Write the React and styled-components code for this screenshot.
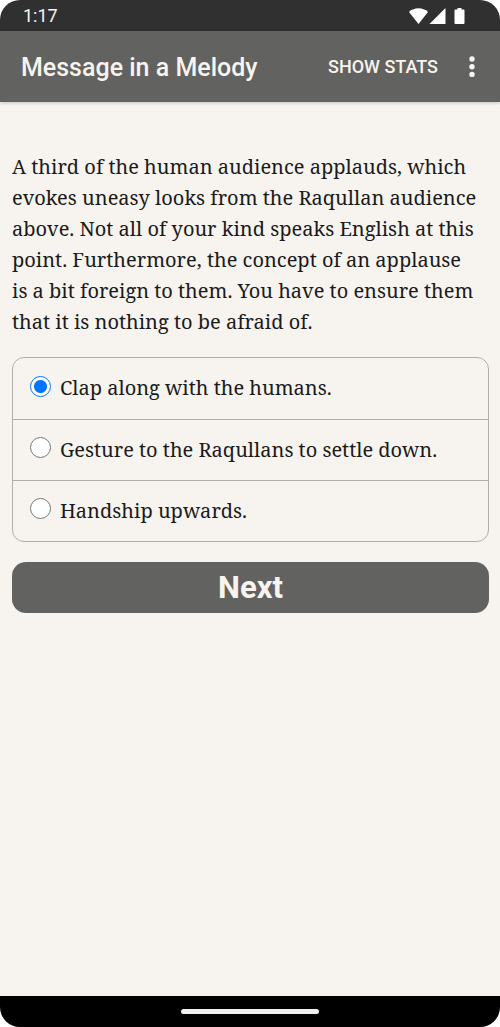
import React, { useState } from 'react';
import styled, { createGlobalStyle } from 'styled-components';

const GlobalStyle = createGlobalStyle`
	* {
		box-sizing: border-box;
	}

	body {
		margin: 0;
		background: #ffffff;
	}
`;

const Screen = styled.div`
	display: flex;
	flex-direction: column;
	min-height: 100vh;
	border-radius: 20px;
	overflow: hidden;
	background: #f7f4f0;
	color: #1b1b1b;
	font-family: 'Noto Serif', 'Liberation Serif', serif;
`;

const StatusBar = styled.div`
	display: flex;
	align-items: center;
	justify-content: space-between;
	height: 31px;
	padding: 0 34px 0 23px;
	background: #303030;
	color: #f4f4f4;
	font: 400 18px/30px Roboto, sans-serif;
`;

const StatusIcons = styled.svg`
	display: block;
	width: 57px;
	height: 18px;
	fill: #ffffff;
`;

const AppBar = styled.header`
	display: flex;
	align-items: center;
	height: 71px;
	padding: 0 15px 0 21px;
	background: #626260;
	box-shadow: 0 1px 3px rgba(0, 0, 0, 0.2);
	color: #f7f4f0;
	font-family: Roboto, sans-serif;

	h1 {
		flex: 1;
		margin: 0;
		padding-top: 2px;
		font-size: 25px;
		font-weight: 500;
		line-height: 32px;
	}

	button {
		padding: 0;
		border: none;
		background: none;
		color: inherit;
		cursor: pointer;
	}
`;

const StatsButton = styled.button`
	font: 500 18px/24px Roboto, sans-serif;
`;

const MenuButton = styled.button`
	width: 26px;
	height: 26px;
	margin-left: 21px;

	svg {
		display: block;
		fill: currentColor;
	}
`;

const Story = styled.main`
	flex: 1;
	padding: 49px 11px 24px 12px;

	p {
		margin: 0 0 20px;
		padding-right: 8px;
		font-size: 20px;
		line-height: 31px;
	}
`;

const Choices = styled.fieldset`
	margin: 0 0 20px;
	padding: 0;
	border: 1px solid #b0aeac;
	border-radius: 12px;
`;

const Choice = styled.label`
	display: flex;
	align-items: center;
	gap: 9px;
	min-height: 61px;
	padding: 0 17px 1px;
	font-size: 20px;
	line-height: 30px;
	cursor: pointer;

	& + & {
		border-top: 1px solid #b0aeac;
	}
`;

const Radio = styled.input`
	appearance: none;
	flex: none;
	width: 21px;
	height: 21px;
	margin: 0 0 4px;
	border: 1px solid #767676;
	border-radius: 50%;
	background: #ffffff;

	&:checked {
		border-color: #0075ff;
		background: radial-gradient(circle, #0075ff 6px, #ffffff 7px);
	}
`;

const NextButton = styled.button`
	display: block;
	width: 100%;
	height: 51px;
	padding: 0;
	border: none;
	border-radius: 14px;
	background: #626260;
	color: #f7f4f0;
	font: 700 31px/50px Roboto, sans-serif;
	cursor: pointer;
`;

const NavBar = styled.footer`
	display: flex;
	align-items: center;
	justify-content: center;
	height: 31px;
	background: #000000;
`;

const HomeHandle = styled.div`
	width: 138px;
	height: 5px;
	border-radius: 3px;
	background: #f0f0f0;
`;

const choices = [
	'Clap along with the humans.',
	'Gesture to the Raqullans to settle down.',
	'Handship upwards.',
];

const App = () => {
	const [selected, setSelected] = useState(0);

	return (
		<>
			<GlobalStyle />
			<Screen>
				<StatusBar>
					<span>1:17</span>
					<StatusIcons viewBox="0 0 57 18" aria-hidden="true">
						<path d="M0 5 C5 0 14 0 19 5 L9.5 17 Z" />
						<path d="M36.500 1 V17 H20.500 Z" />
						<path d="M48.500 1 h4 v1.500 h2 q1 0 1 1 V16 q0 1 -1 1 h-8 q-1 0 -1 -1 V3.500 q0 -1 1 -1 h2 Z" />
					</StatusIcons>
				</StatusBar>
				<AppBar>
					<h1>Message in a Melody</h1>
					<StatsButton type="button">SHOW STATS</StatsButton>
					<MenuButton type="button" aria-label="More options">
						<svg width="26" height="26" viewBox="0 0 26 26">
							<circle cx="13" cy="5" r="2.700" />
							<circle cx="13" cy="12.700" r="2.700" />
							<circle cx="13" cy="20.400" r="2.700" />
						</svg>
					</MenuButton>
				</AppBar>
				<Story>
					<p>
						A third of the human audience applauds, which evokes uneasy looks
						from the Raqullan audience above. Not all of your kind speaks
						English at this point. Furthermore, the concept of an applause is a
						bit foreign to them. You have to ensure them that it is nothing to
						be afraid of.
					</p>
					<Choices aria-label="Choices">
						{choices.map((text, index) => (
							<Choice key={text}>
								<Radio
									type="radio"
									name="choice"
									checked={selected === index}
									onChange={() => setSelected(index)}
								/>
								{text}
							</Choice>
						))}
					</Choices>
					<NextButton type="button">Next</NextButton>
				</Story>
				<NavBar>
					<HomeHandle />
				</NavBar>
			</Screen>
		</>
	);
};

export default App;
